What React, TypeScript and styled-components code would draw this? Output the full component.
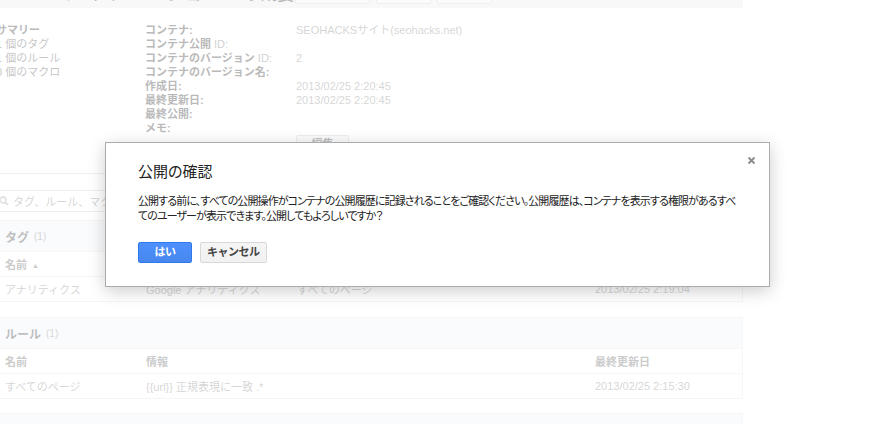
import React from "react";
import styled, { createGlobalStyle } from "styled-components";

const GlobalStyle = createGlobalStyle`
  html, body { margin: 0; padding: 0; background: #fff; }
  body {
    font-family: "Liberation Sans", "Noto Sans CJK JP", sans-serif;
    overflow: hidden;
  }
`;

const jp = `"Liberation Sans", "Noto Sans CJK JP", sans-serif`;

const Page = styled.div`
  position: relative;
  width: 879px;
  height: 424px;
  overflow: hidden;
  background: #fff;
`;

const Content = styled.div`
  margin-left: -4px;
  width: 747px;
  font-family: ${jp};
  font-size: 11px;
  color: #333;
`;

const TopBar = styled.div`
  display: flex;
  align-items: flex-end;
  height: 8px;
  background: #ebebeb;
  overflow: hidden;
`;

const TopTitle = styled.div`
  flex: 0 0 272px;
  box-sizing: border-box;
  padding-left: 58px;
  margin-bottom: 5px;
  font-size: 18px;
  line-height: 18px;
  color: #333;
  white-space: nowrap;
`;

const TopButton = styled.div<{ $w: number }>`
  width: ${(p) => p.$w}px;
  height: 28px;
  margin-right: 6px;
  margin-bottom: 4px;
  box-sizing: border-box;
  border: 1px solid #cfcfcf;
  border-radius: 2px;
  background: #f4f4f4;
`;

const Overview = styled.div`
  display: grid;
  grid-template-columns: 149px 151px 1fr;
  padding-top: 15px;
  line-height: 14px;
`;

const SummaryList = styled.div`
  display: flex;
  flex-direction: column;
`;

const SummaryTitle = styled.div`
  font-weight: bold;
  color: #333;
`;

const SummaryItem = styled.div`
  color: #555;
`;

const Label = styled.div`
  font-weight: bold;
  color: #333;
  white-space: nowrap;
`;

const LabelSmall = styled.span`
  font-weight: normal;
  color: #777;
`;

const Value = styled.div`
  color: #888;
  white-space: nowrap;
  min-height: 14px;
`;

const EditButton = styled.div`
  width: 53px;
  height: 18px;
  box-sizing: border-box;
  border: 1px solid #ccc;
  border-radius: 2px;
  background: #f4f4f4;
  text-align: center;
  line-height: 16px;
  font-weight: bold;
  color: #444;
`;

const Divider = styled.div`
  margin-top: 20px;
  border-top: 1px solid #d6d6d6;
`;

const Search = styled.div`
  margin-top: 16px;
  width: 320px;
  height: 22px;
  box-sizing: border-box;
  border: 1px solid #cfcfcf;
  display: flex;
  align-items: center;
  gap: 4px;
  padding-left: 2px;
  color: #888;
`;

const Section = styled.div<{ $top: number }>`
  margin-top: ${(p) => p.$top}px;
  border: 1px solid #e2e2e2;
  border-right-color: #e8e8e8;
`;

const SectionHeader = styled.div`
  height: 30px;
  display: flex;
  align-items: center;
  gap: 5px;
  padding-left: 8px;
  background: #eef2f8;
  font-size: 12px;
  font-weight: bold;
  color: #444;
`;

const Count = styled.span`
  font-size: 10px;
  font-weight: normal;
  color: #888;
`;

const Row = styled.div<{ $head?: boolean }>`
  display: grid;
  grid-template-columns: 141px 151px 298px 1fr;
  height: 24px;
  align-items: center;
  padding-left: 8px;
  border-top: 1px solid #e6e6e6;
  color: ${(p) => (p.$head ? "#666" : "#888")};
  font-weight: ${(p) => (p.$head ? "bold" : "normal")};
  white-space: nowrap;
`;

const SortArrow = styled.span`
  font-size: 7px;
  margin-left: 5px;
  vertical-align: 1px;
`;

const Overlay = styled.div`
  position: absolute;
  inset: 0;
  background: rgba(255, 255, 255, 0.66);
`;

const Dialog = styled.div`
  position: absolute;
  left: 105px;
  top: 142px;
  width: 665px;
  height: 145px;
  box-sizing: border-box;
  padding: 19px 32px 0 32px;
  background: #fff;
  border: 1px solid #acacac;
  box-shadow: 0 4px 16px rgba(0, 0, 0, 0.2);
  font-family: ${jp};
  color: #222;
`;

const DialogTitle = styled.div`
  font-size: 15px;
  line-height: 20px;
  font-feature-settings: "palt";
`;

const DialogBody = styled.div`
  margin-top: 12px;
  font-size: 11px;
  line-height: 15px;
  white-space: nowrap;
  font-feature-settings: "palt";
  letter-spacing: -0.9px;
`;

const Actions = styled.div`
  display: flex;
  gap: 8px;
  margin-top: 18px;
`;

const Button = styled.button<{ $primary?: boolean }>`
  height: 21px;
  min-width: 54px;
  padding: 0 6px;
  box-sizing: border-box;
  border-radius: 2px;
  font-family: ${jp};
  font-size: 11px;
  font-weight: bold;
  line-height: 19px;
  letter-spacing: -0.5px;
  cursor: pointer;
  border: 1px solid ${(p) => (p.$primary ? "#3079ed" : "#d8d8d8")};
  color: ${(p) => (p.$primary ? "#fff" : "#444")};
  background: ${(p) =>
    p.$primary
      ? "linear-gradient(#4d90fe, #4787ed)"
      : "linear-gradient(#f5f5f5, #f1f1f1)"};
`;

const Close = styled.div`
  position: absolute;
  right: 13px;
  top: 13px;
  width: 9px;
  height: 9px;
  display: flex;
`;

const overviewRows: [React.ReactNode, string][] = [
  ["コンテナ:", "SEOHACKSサイト(seohacks.net)"],
  [<>コンテナ公開 <LabelSmall>ID:</LabelSmall></>, ""],
  [<>コンテナのバージョン <LabelSmall>ID:</LabelSmall></>, "2"],
  ["コンテナのバージョン名:", ""],
  ["作成日:", "2013/02/25 2:20:45"],
  ["最終更新日:", "2013/02/25 2:20:45"],
  ["最終公開:", ""],
  ["メモ:", ""],
];

export default function App() {
  return (
    <Page>
      <GlobalStyle />
      <Content>
        <TopBar>
          <TopTitle>コンテナ バージョン 2 の概要</TopTitle>
          <TopButton $w={75} />
          <TopButton $w={55} />
          <TopButton $w={55} />
        </TopBar>

        <Overview>
          <SummaryList>
            <SummaryTitle>サマリー</SummaryTitle>
            <SummaryItem>1 個のタグ</SummaryItem>
            <SummaryItem>1 個のルール</SummaryItem>
            <SummaryItem>0 個のマクロ</SummaryItem>
          </SummaryList>
          <SummaryList>
            {overviewRows.map(([l], i) => (
              <Label key={i}>{l}</Label>
            ))}
          </SummaryList>
          <SummaryList>
            {overviewRows.map(([, v], i) => (
              <Value key={i}>{v}</Value>
            ))}
            <EditButton>編集</EditButton>
          </SummaryList>
        </Overview>

        <Divider />

        <Search>
          <svg width="10" height="10" viewBox="0 0 10 10">
            <circle cx="4" cy="4" r="3" fill="none" stroke="#999" strokeWidth="1.3" />
            <line x1="6.2" y1="6.2" x2="9" y2="9" stroke="#999" strokeWidth="1.5" />
          </svg>
          タグ、ルール、マクロを検索
        </Search>

        <Section $top={8}>
          <SectionHeader>
            タグ <Count>(1)</Count>
          </SectionHeader>
          <Row $head>
            <span>
              名前<SortArrow>▲</SortArrow>
            </span>
            <span />
            <span />
            <span />
          </Row>
          <Row>
            <span>アナリティクス</span>
            <span>Google アナリティクス</span>
            <span>すべてのページ</span>
            <span>2013/02/25 2:19:04</span>
          </Row>
        </Section>

        <Section $top={15}>
          <SectionHeader>
            ルール <Count>(1)</Count>
          </SectionHeader>
          <Row $head>
            <span>名前</span>
            <span>情報</span>
            <span />
            <span>最終更新日</span>
          </Row>
          <Row>
            <span>すべてのページ</span>
            <span>{"{{url}} 正規表現に一致 .*"}</span>
            <span />
            <span>2013/02/25 2:15:30</span>
          </Row>
        </Section>

        <Section $top={14}>
          <SectionHeader>
            マクロ <Count>(0)</Count>
          </SectionHeader>
        </Section>
      </Content>

      <Overlay />

      <Dialog role="dialog">
        <Close>
          <svg width="9" height="9" viewBox="0 0 9 9">
            <path d="M1.5 1.5 L7.5 7.5 M7.5 1.5 L1.5 7.5" stroke="#8a8a8a" strokeWidth="1.8" />
          </svg>
        </Close>
        <DialogTitle>公開の確認</DialogTitle>
        <DialogBody>
          公開する前に、すべての公開操作がコンテナの公開履歴に記録されることをご確認ください。公開履歴は、コンテナを表示する権限があるすべ
          <br />
          てのユーザーが表示できます。公開してもよろしいですか？
        </DialogBody>
        <Actions>
          <Button $primary>はい</Button>
          <Button>キャンセル</Button>
        </Actions>
      </Dialog>
    </Page>
  );
}
